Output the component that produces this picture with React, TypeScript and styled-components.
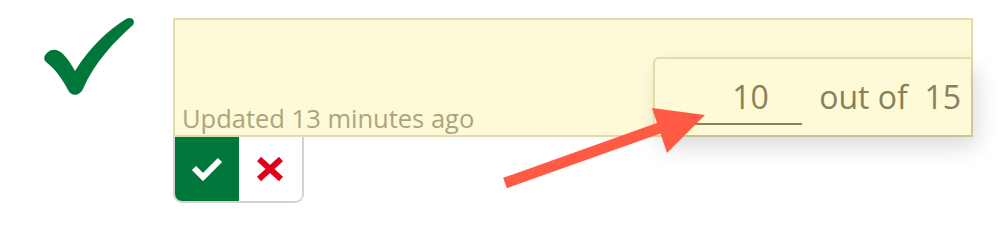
import styled, { createGlobalStyle } from 'styled-components';

const GlobalStyle = createGlobalStyle`
  html, body {
    margin: 0;
    padding: 0;
    background: #ffffff;
  }
  body {
    font-family: "Open Sans", "DejaVu Sans", sans-serif;
  }
`;

function BigCheck() {
  return (
    <svg width="100" height="85" viewBox="40 14 100 85">
      <path
        d="M48 52 C53 48 59 50 63 54 C67 58 72 65 75 71 C90 47 108 30 126 19 C131 16 136 20 133 25 C114 42 94 63 83 89 C80 96 71 97 68 90 C62 78 54 68 46 62 C43 59 44 55 48 52 Z"
        fill="#00773a"
      />
    </svg>
  );
}

function Arrow() {
  return (
    <ArrowLayer width="1000" height="237" viewBox="0 0 1000 237">
      <line x1="505" y1="183" x2="665" y2="126" stroke="#ff5a44" strokeWidth="11" />
      <polygon points="652,108 705,115 667,153" fill="#ff5a44" />
    </ArrowLayer>
  );
}

function App() {
  return (
    <>
      <GlobalStyle />
      <Page>
        <Mark>
          <BigCheck />
        </Mark>
        <Column>
          <Card>
            <Updated>Updated 13 minutes ago</Updated>
            <Score>
              <ScoreField>10</ScoreField>
              <OutOf>out of&nbsp; 15</OutOf>
            </Score>
          </Card>
          <Actions>
            <ActionButton $accept aria-label="accept">
              <svg width="32" height="26" viewBox="0 0 32 26">
                <polyline points="3,12 12,21 29,4" fill="none" stroke="#ffffff" strokeWidth="6" />
              </svg>
            </ActionButton>
            <ActionButton aria-label="reject">
              <svg width="28" height="24" viewBox="0 0 28 24">
                <path d="M3 2 L25 22 M25 2 L3 22" stroke="#e2001a" strokeWidth="6" />
              </svg>
            </ActionButton>
          </Actions>
        </Column>
        <Arrow />
      </Page>
    </>
  );
}

const Page = styled.div`
  position: relative;
  width: 1000px;
  height: 237px;
  display: flex;
  align-items: flex-start;
  padding: 18px 0 0 40px;
  box-sizing: border-box;
`;

const Mark = styled.div`
  width: 133px;
  margin-top: -4px;
`;

const Column = styled.div`
  display: flex;
  flex-direction: column;
  width: 800px;
`;

const Card = styled.div`
  position: relative;
  height: 119px;
  box-sizing: border-box;
  border: 2px solid #e3dbaa;
  background: #fef9d6;
  display: flex;
  align-items: flex-end;
  justify-content: space-between;
`;

const Updated = styled.div`
  font-size: 25.5px;
  color: #aba57d;
  padding: 0 0 0 7px;
  line-height: 34px;
`;

const Score = styled.div`
  width: 318px;
  height: 78px;
  box-sizing: border-box;
  border-top: 2px solid #e3dbaa;
  border-left: 2px solid #e3dbaa;
  border-top-left-radius: 6px;
  background: #fef9d6;
  box-shadow: 6px 12px 22px rgba(0, 0, 0, 0.14);
  display: flex;
  align-items: flex-end;
  padding: 0 10px 10px 38px;
  color: #878158;
  font-size: 32px;
`;

const ScoreField = styled.div`
  width: 111px;
  text-align: center;
  border-bottom: 2px solid #878158;
  line-height: 44px;
  padding-bottom: 4px;
  padding-left: 6px;
  box-sizing: border-box;
`;

const OutOf = styled.div`
  margin-left: 17px;
  line-height: 44px;
  padding-bottom: 6px;
  white-space: nowrap;
`;

const Actions = styled.div`
  display: flex;
  width: 131px;
  height: 66px;
  box-sizing: border-box;
  border: 2px solid #d2d2d2;
  border-top: none;
  border-radius: 0 0 9px 9px;
  overflow: hidden;
`;

const ActionButton = styled.button<{ $accept?: boolean }>`
  flex: 1;
  border: none;
  padding: 0;
  margin: 0;
  display: flex;
  align-items: center;
  justify-content: center;
  background: ${(p) => (p.$accept ? '#00773a' : '#ffffff')};
  cursor: pointer;
`;

const ArrowLayer = styled.svg`
  position: absolute;
  left: 0;
  top: 0;
  pointer-events: none;
`;

export default App;
